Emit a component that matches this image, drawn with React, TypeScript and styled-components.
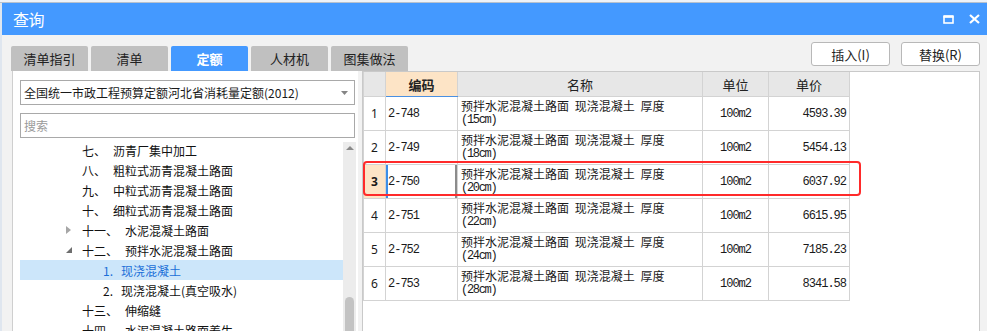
import React from 'react'
import styled, { createGlobalStyle } from 'styled-components'

const GlobalStyle = createGlobalStyle`
  html, body {
    margin: 0;
    padding: 0;
  }
  body {
    width: 987px;
    height: 331px;
    overflow: hidden;
    background: #dfe6ef;
    font-family: 'Noto Sans CJK SC', 'Noto Sans', sans-serif;
    color: #1a1a1a;
  }
`

const MONO = `'Liberation Mono', 'Noto Sans CJK SC', monospace`
const BLUE = '#4499ff'
const PEACH = '#fde4c6'
const GRID = '#d3d3d3'

const Backdrop = styled.div`
  height: 3px;
  box-sizing: border-box;
  background: #eef2f8;
  border-bottom: 1px solid #b7c1cd;
`

const Dialog = styled.div`
  margin-left: 2px;
  width: 985px;
  height: 328px;
  display: flex;
  flex-direction: column;
  background: #f2f2f2;
`

const TitleBar = styled.div`
  height: 32px;
  flex-shrink: 0;
  display: flex;
  align-items: center;
  padding: 0 7px 0 11px;
  background: ${BLUE};
  color: #fff;
`

const Title = styled.div`
  flex: 1;
  font-size: 16px;
  letter-spacing: -0.5px;
`

const WindowButtons = styled.div`
  display: flex;
  align-items: center;
  gap: 15px;
`

const TopRow = styled.div`
  height: 36px;
  flex-shrink: 0;
  display: flex;
  justify-content: space-between;
  padding: 0 7px 0 9px;
`

const TabList = styled.div`
  align-self: flex-end;
  display: flex;
  gap: 3px;
`

const Tab = styled.div<{ $active?: boolean }>`
  width: 77px;
  height: 25px;
  display: flex;
  align-items: center;
  justify-content: center;
  border-radius: 2px 2px 0 0;
  font-size: 13px;
  background: ${({ $active }) => ($active ? BLUE : '#c0c0c0')};
  color: ${({ $active }) => ($active ? '#fff' : '#222')};
  font-weight: ${({ $active }) => ($active ? 700 : 400)};
`

const ActionGroup = styled.div`
  align-self: flex-start;
  margin-top: 7px;
  display: flex;
  gap: 11px;
`

const ActionButton = styled.button`
  width: 79px;
  height: 24px;
  padding: 0;
  box-sizing: border-box;
  background: #fff;
  border: 1px solid #b8b8b8;
  border-radius: 3px;
  font-family: inherit;
  font-size: 13px;
  color: #222;
`

const Content = styled.div`
  flex: 1;
  min-height: 0;
  display: flex;
  gap: 4px;
  padding: 0 7px 0 10px;
`

const LeftPanel = styled.div`
  width: 346px;
  box-sizing: border-box;
  display: flex;
  flex-direction: column;
  padding: 9px 2px 0 7px;
  background: #fff;
  border-left: 1px solid #cfcfcf;
`

const Field = styled.div`
  width: 335px;
  height: 25px;
  box-sizing: border-box;
  flex-shrink: 0;
  display: flex;
  align-items: center;
  justify-content: space-between;
  padding: 0 6px 0 3px;
  border: 1px solid #a9a9a9;
  font-size: 12px;
`

const SearchInput = styled.input`
  width: 335px;
  height: 25px;
  box-sizing: border-box;
  flex-shrink: 0;
  margin-top: 8px;
  padding: 0 3px;
  border: 1px solid #a9a9a9;
  outline: none;
  font-family: inherit;
  font-size: 12px;
  &::placeholder {
    color: #9a9a9a;
  }
`

const TreeArea = styled.div`
  flex: 1;
  min-height: 0;
  margin-top: 2px;
  display: flex;
  overflow: hidden;
`

const TreeList = styled.div`
  width: 323px;
`

const TreeRow = styled.div<{ $level: number; $selected?: boolean }>`
  height: 20px;
  display: flex;
  align-items: center;
  padding-left: ${({ $level }) => 46 + $level * 21}px;
  font-size: 12px;
  white-space: nowrap;
  background: ${({ $selected }) => ($selected ? '#cce6fa' : 'transparent')};
  color: ${({ $selected }) => ($selected ? '#1b6fd8' : '#111')};
`

const Toggle = styled.span`
  width: 16px;
  display: flex;
  align-items: center;
`

const TreeNum = styled.span<{ $gap: number }>`
  margin-right: ${({ $gap }) => $gap}px;
`

const Scrollbar = styled.div`
  width: 13px;
  margin-top: 2px;
  display: flex;
  flex-direction: column;
  align-items: center;
  background: #ececec;
`

const ScrollArrow = styled.div`
  margin-top: 4px;
  width: 0;
  height: 0;
  border-left: 4px solid transparent;
  border-right: 4px solid transparent;
  border-bottom: 4px solid #8a8a8a;
`

const ScrollThumb = styled.div`
  margin-top: auto;
  width: 9px;
  height: 34px;
  flex-shrink: 0;
  border-radius: 5px 5px 0 0;
  background: #c3c3c3;
`

const RightPanel = styled.div`
  flex: 1;
  position: relative;
  background: #fff;
  border: 1px solid #c9c9c9;
  border-bottom: none;
`

const Grid = styled.table`
  border-collapse: collapse;
  table-layout: fixed;
  width: 481px;
`

const HeadCell = styled.th<{ $active?: boolean; $w: number }>`
  width: ${({ $w }) => $w}px;
  height: 24px;
  padding: 0;
  border: 1px solid ${GRID};
  border-top: none;
  border-bottom: 1px solid ${({ $active }) => ($active ? '#4a90e2' : GRID)};
  background: ${({ $active }) => ($active ? PEACH : '#e7e7e7')};
  font-size: 13px;
  font-weight: ${({ $active }) => ($active ? 700 : 400)};
  color: #222;
`

const Cell = styled.td<{ $align?: 'left' | 'center' | 'right' }>`
  height: 32px;
  padding: 0 3px;
  border: 1px solid ${GRID};
  text-align: ${({ $align }) => $align ?? 'left'};
  font-family: ${MONO};
  font-size: 12px;
  letter-spacing: -1px;
  white-space: nowrap;
`

const IndexCell = styled(Cell)<{ $current?: boolean }>`
  padding: 0;
  text-align: center;
  font-family: 'Noto Sans', sans-serif;
  letter-spacing: 0;
  background: ${({ $current }) => ($current ? PEACH : '#fff')};
  font-weight: ${({ $current }) => ($current ? 700 : 400)};
`

const CodeCell = styled(Cell)<{ $current?: boolean }>`
  padding-left: 2px;
  box-shadow: ${({ $current }) =>
    $current ? 'inset 2px 0 0 #3c8ee8, inset -2px 0 0 #8c8c8c' : 'none'};
`

const NameCell = styled(Cell)`
  vertical-align: top;
  padding: 1px 3px 0;
`

const NameLine = styled.span`
  display: block;
  height: 15px;
  line-height: 15px;
  font-family: 'Noto Sans CJK SC', sans-serif;
  letter-spacing: 0;
  word-spacing: 3px;
`

const Thickness = styled.span`
  display: block;
  height: 14px;
  line-height: 14px;
  font-size: 12px;
  letter-spacing: -1.3px;
`

const Highlight = styled.div`
  position: absolute;
  left: 0;
  top: 89px;
  width: 498px;
  height: 35px;
  box-sizing: border-box;
  border: 2.5px solid #ff2a2a;
  border-radius: 4px;
  pointer-events: none;
`

const tabs = ['清单指引', '清单', '定额', '人材机', '图集做法']

type Node = { num: string; text: string; level: number; toggle?: 'open' | 'closed'; selected?: boolean }

const tree: Node[] = [
  { num: '七、', text: '沥青厂集中加工', level: 0 },
  { num: '八、', text: '粗粒式沥青混凝土路面', level: 0 },
  { num: '九、', text: '中粒式沥青混凝土路面', level: 0 },
  { num: '十、', text: '细粒式沥青混凝土路面', level: 0 },
  { num: '十一、', text: '水泥混凝土路面', level: 0, toggle: 'closed' },
  { num: '十二、', text: '预拌水泥混凝土路面', level: 0, toggle: 'open' },
  { num: '1.', text: '现浇混凝土', level: 1, selected: true },
  { num: '2.', text: '现浇混凝土(真空吸水)', level: 1 },
  { num: '十三、', text: '伸缩缝', level: 0 },
  { num: '十四、', text: '水泥混凝土路面养生', level: 0 },
]

const rows = [
  { code: '2-748', cm: 15, price: '4593.39' },
  { code: '2-749', cm: 18, price: '5454.13' },
  { code: '2-750', cm: 20, price: '6037.92' },
  { code: '2-751', cm: 22, price: '6615.95' },
  { code: '2-752', cm: 24, price: '7185.23' },
  { code: '2-753', cm: 28, price: '8341.58' },
]

function ToggleIcon({ state }: { state?: 'open' | 'closed' }) {
  if (state === 'closed')
    return (
      <svg width="5" height="8" viewBox="0 0 5 8">
        <polygon points="0,0 5,4 0,8" fill="#a6a6a6" />
      </svg>
    )
  if (state === 'open')
    return (
      <svg width="6" height="6" viewBox="0 0 6 6">
        <polygon points="6,0 6,6 0,6" fill="#6e6e6e" />
      </svg>
    )
  return null
}

export default function App() {
  return (
    <>
      <GlobalStyle />
      <Backdrop />
      <Dialog>
        <TitleBar>
          <Title>查询</Title>
          <WindowButtons>
            <svg width="11" height="9" viewBox="0 0 11 9">
              <rect x="1" y="1.5" width="9" height="6.5" fill="none" stroke="#fff" strokeWidth="1.6" />
              <line x1="0.5" y1="1.5" x2="10.5" y2="1.5" stroke="#fff" strokeWidth="2.6" />
            </svg>
            <svg width="11" height="10" viewBox="0 0 11 10">
              <path d="M1 1 L10 9 M10 1 L1 9" stroke="#fff" strokeWidth="2.2" />
            </svg>
          </WindowButtons>
        </TitleBar>

        <TopRow>
          <TabList>
            {tabs.map(t => (
              <Tab key={t} $active={t === '定额'}>
                {t}
              </Tab>
            ))}
          </TabList>
          <ActionGroup>
            <ActionButton>插入(I)</ActionButton>
            <ActionButton>替换(R)</ActionButton>
          </ActionGroup>
        </TopRow>

        <Content>
          <LeftPanel>
            <Field>
              <span>全国统一市政工程预算定额河北省消耗量定额(2012)</span>
              <svg width="7" height="4" viewBox="0 0 7 4">
                <polygon points="0,0 7,0 3.5,4" fill="#858585" />
              </svg>
            </Field>
            <SearchInput placeholder="搜索" readOnly />
            <TreeArea>
              <TreeList>
                {tree.map(n => (
                  <TreeRow key={n.num + n.text} $level={n.level} $selected={n.selected}>
                    <Toggle>
                      <ToggleIcon state={n.toggle} />
                    </Toggle>
                    <TreeNum $gap={n.level ? 8 : 7}>{n.num}</TreeNum>
                    {n.text}
                  </TreeRow>
                ))}
              </TreeList>
              <Scrollbar>
                <ScrollArrow />
                <ScrollThumb />
              </Scrollbar>
            </TreeArea>
          </LeftPanel>

          <RightPanel>
            <Grid>
              <thead>
                <tr>
                  <HeadCell $w={21} />
                  <HeadCell $w={71} $active>
                    编码
                  </HeadCell>
                  <HeadCell $w={244}>名称</HeadCell>
                  <HeadCell $w={65}>单位</HeadCell>
                  <HeadCell $w={80}>单价</HeadCell>
                </tr>
              </thead>
              <tbody>
                {rows.map((r, i) => {
                  const current = i === 2
                  return (
                    <tr key={r.code}>
                      <IndexCell $current={current}>{i + 1}</IndexCell>
                      <CodeCell $current={current}>{r.code}</CodeCell>
                      <NameCell>
                        <NameLine>预拌水泥混凝土路面 现浇混凝土 厚度</NameLine>
                        <Thickness>({r.cm}cm)</Thickness>
                      </NameCell>
                      <Cell $align="center">100m2</Cell>
                      <Cell $align="right">{r.price}</Cell>
                    </tr>
                  )
                })}
              </tbody>
            </Grid>
            <Highlight />
          </RightPanel>
        </Content>
      </Dialog>
    </>
  )
}
